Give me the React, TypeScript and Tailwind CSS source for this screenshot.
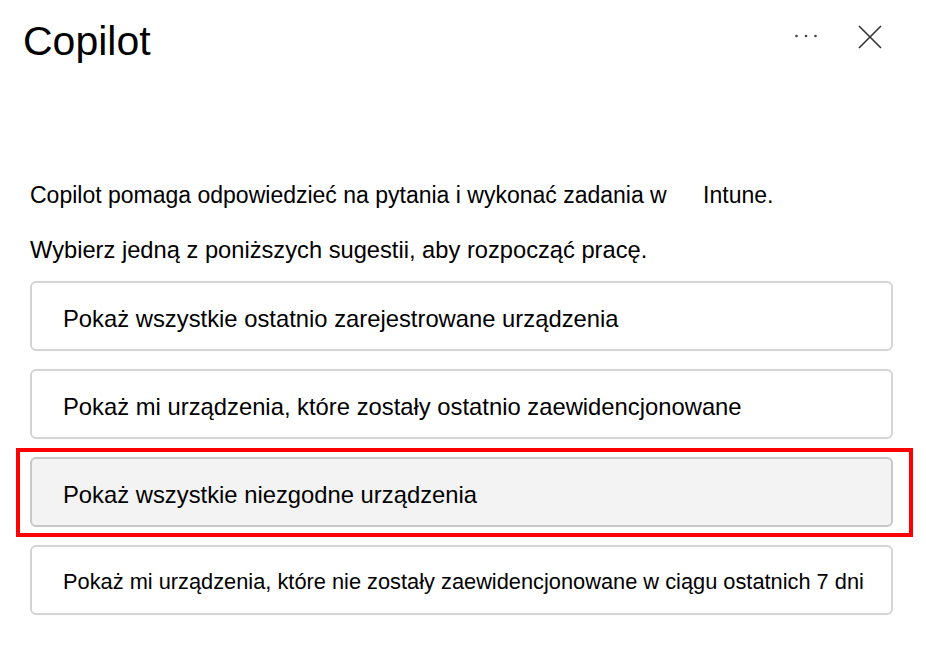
import { ReactNode } from 'react'

const suggestions = [
  'Pokaż wszystkie ostatnio zarejestrowane urządzenia',
  'Pokaż mi urządzenia, które zostały ostatnio zaewidencjonowane',
  'Pokaż wszystkie niezgodne urządzenia',
  'Pokaż mi urządzenia, które nie zostały zaewidencjonowane w ciągu ostatnich 7 dni',
]

function Suggestion({ children, active, small }: { children: ReactNode; active?: boolean; small?: boolean }) {
  return (
    <div className="relative">
      <button
        className={`flex h-[70px] w-full items-center rounded-[6px] border-2 pl-[31px] pt-[5px] text-left text-black ${
          active ? 'border-[#c8c8c8] bg-[#f3f3f3]' : 'border-[#d4d4d4] bg-white'
        } ${small ? 'text-[21.8px]' : 'text-[23.8px]'}`}
      >
        {children}
      </button>
      {active && (
        <div className="pointer-events-none absolute -top-[9px] -bottom-[10px] -left-[14px] -right-[20px] border-4 border-[#ff0000]" />
      )}
    </div>
  )
}

export default function App() {
  return (
    <div className="h-[656px] w-[926px] overflow-hidden bg-white font-['Liberation_Sans',Arial,sans-serif] text-black">
      <header className="flex items-start justify-between pl-[23px] pr-[44px]">
        <h1 className="pt-[17px] text-[41px] leading-[48px] font-normal">Copilot</h1>
        <div className="flex items-center gap-[41px] pt-[25px]">
          <svg width="22" height="4" viewBox="0 0 22 4" className="mb-[2px] text-[#444]" fill="currentColor">
            <circle cx="1.5" cy="2" r="1.3" />
            <circle cx="11" cy="2" r="1.3" />
            <circle cx="20.5" cy="2" r="1.3" />
          </svg>
          <svg width="24" height="24" viewBox="0 0 24 24" className="text-[#333]" stroke="currentColor" strokeWidth="1.6" fill="none">
            <path d="M1 1 L23 23 M23 1 L1 23" />
          </svg>
        </div>
      </header>

      <div className="pl-[30px] pr-[33px] pt-[114px]">
        <p className="text-[23px] leading-[32px]">
          Copilot pomaga odpowiedzieć na pytania i wykonać zadania w
          <span className="inline-block w-[30px]" /> Intune.
        </p>
        <p className="mt-[23px] text-[23.7px] leading-[32px]">
          Wybierz jedną z poniższych sugestii, aby rozpocząć pracę.
        </p>

        <div className="mt-[15px] flex flex-col gap-[18px]">
          {suggestions.map((s, i) => (
            <Suggestion key={s} active={i === 2} small={i === 3}>
              {s}
            </Suggestion>
          ))}
        </div>
      </div>
    </div>
  )
}
